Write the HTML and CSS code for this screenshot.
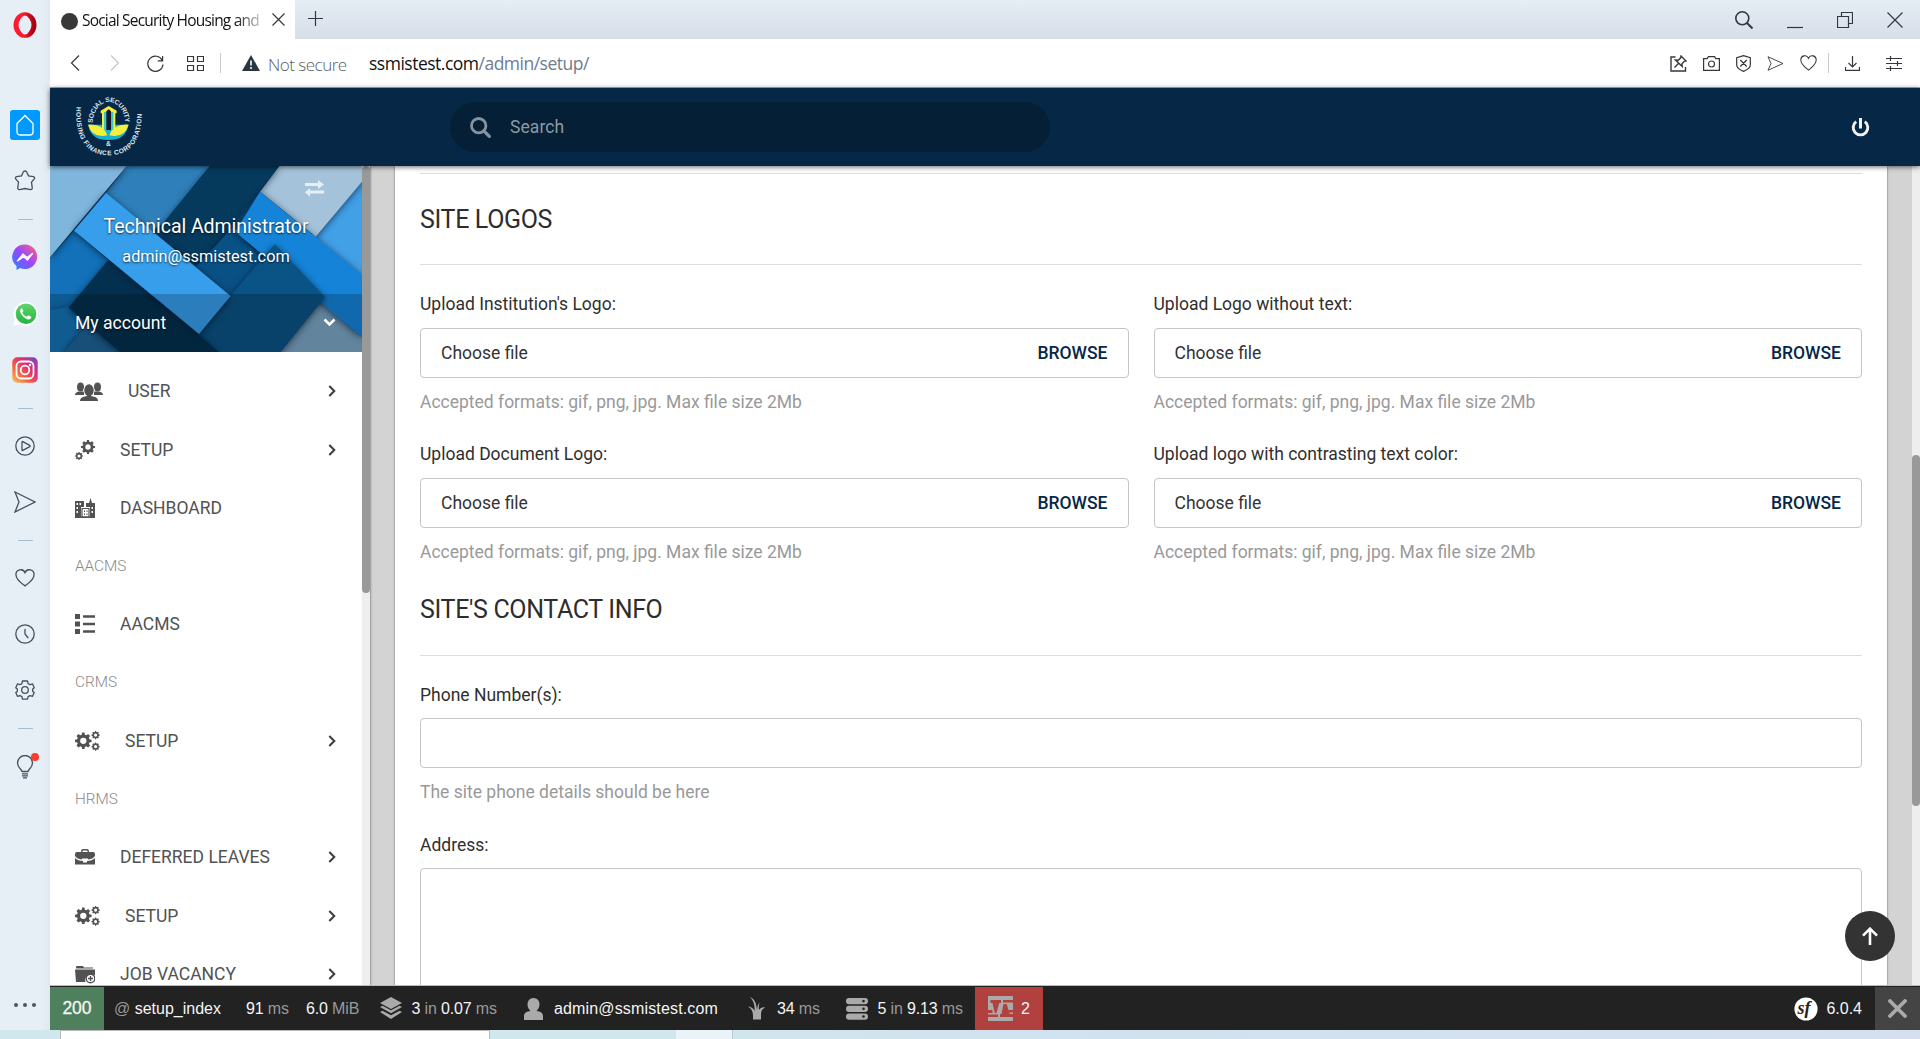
FILE: index.html
```html
<!DOCTYPE html>
<html lang="en">
<head>
<meta charset="utf-8">
<title>Social Security Housing and Finance Corporation</title>
<link rel="stylesheet" href="styles.css">
</head>
<body>
<svg class="defs" width="0" height="0">
  <defs>
    <linearGradient id="gMsg" x1="0" y1="1" x2="1" y2="0"><stop offset="0" stop-color="#1a8dff"/><stop offset=".5" stop-color="#9a45ff"/><stop offset="1" stop-color="#ff6a6a"/></linearGradient>
    <linearGradient id="gInsta" x1="0" y1="1" x2="1" y2="0"><stop offset="0" stop-color="#fdc55a"/><stop offset=".35" stop-color="#f56040"/><stop offset=".65" stop-color="#d92e7f"/><stop offset="1" stop-color="#6a4bc8"/></linearGradient>
    <linearGradient id="gWa" x1="0" y1="0" x2="0" y2="1"><stop offset="0" stop-color="#5fd66b"/><stop offset="1" stop-color="#25b33f"/></linearGradient>
    <linearGradient id="gOp" x1="0" y1="0" x2="1" y2="0"><stop offset=".4" stop-color="#ff1b2d"/><stop offset="1" stop-color="#a70014"/></linearGradient>
    <path id="cog" fill-rule="evenodd" d="M8.6 0h2.8l.5 2.6 1.7.7L15.8 1.8l2.4 2.4-1.5 2.2.7 1.7 2.6.5v2.8l-2.6.5-.7 1.7 1.5 2.2-2.4 2.4-2.2-1.5-1.7.7-.5 2.6H8.6l-.5-2.6-1.7-.7-2.2 1.5-2.4-2.4 1.5-2.2-.7-1.7L0 11.400V8.600l2.600-.5.7-1.7L1.800 4.200 4.200 1.800l2.200 1.500 1.700-.7zM10 6.200a3.800 3.800 0 1 0 0 7.600 3.800 3.800 0 0 0 0-7.600z"/>
    <symbol id="cogs" viewBox="0 0 25 20"><use href="#cog" transform="translate(0 1.500) scale(.83)"/><use href="#cog" transform="translate(16.500 0) scale(.41)"/><use href="#cog" transform="translate(16.500 11.500) scale(.41)"/></symbol>
    <symbol id="chev" viewBox="0 0 8 12"><path d="M1.300 1l5 5-5 5" fill="none" stroke="currentColor" stroke-width="2"/></symbol>
    <symbol id="heart" viewBox="0 0 20 18"><path d="M10 17C7 14.500 1 11 1 6a4.700 4.700 0 0 1 9-2.300A4.700 4.700 0 0 1 19 6c0 5-6 8.500-9 11z"/></symbol>
    <symbol id="plane" viewBox="0 0 22 22"><path d="M1 1l20 10L1 21l4-10z"/></symbol>
  </defs>
</svg>

<div class="window">
  <aside class="rail">
    <svg class="opera" width="26" height="26" viewBox="0 0 26 26"><ellipse cx="13" cy="13" rx="9" ry="10.300" fill="none" stroke="url(#gOp)" stroke-width="5"/><ellipse cx="13" cy="13" rx="5.500" ry="9.500" fill="#e5edf5"/></svg>
    <div class="rail-item home"><svg width="20" height="22" viewBox="0 0 20 22"><path d="M2 9.500L10 1.500l8 8V18a3 3 0 0 1-3 3H5a3 3 0 0 1-3-3z"/></svg></div>
    <div class="rail-item star"><svg width="22" height="21" viewBox="0 0 22 21"><path d="M11 1q1.500 0 2 1.500l1.500 3.300 4.800.8q1.900.6 1 2.300l-2.800 3.300.8 6q-.2 1.700-2 1.500L11 18.500 5.700 19.700q-1.800.2-2-1.500l.8-6L1.700 8.900q-.9-1.700 1-2.300l4.800-.8L9 2.500Q9.500 1 11 1z"/></svg></div>
    <hr>
    <div class="rail-item"><svg class="solid" width="26" height="26" viewBox="0 0 26 26"><path d="M13 .5a12.300 12.300 0 1 1-5 23.600L4.500 26v-4A12.300 12.300 0 0 1 13 .5z" fill="url(#gMsg)"/><path d="M5.500 17l5.500-7 4 3.500 5.500-4-5 6.500-4-3.200z" fill="#fff" stroke="#fff" stroke-linejoin="round"/></svg></div>
    <div class="rail-item chat"><svg class="solid" width="26" height="26" viewBox="0 0 26 26"><path d="M14 1a12 12 0 1 1-6 22.300L1 25l1.800-6.500A12 12 0 0 1 14 1z" fill="#fff"/><circle cx="14" cy="12.700" r="10.300" fill="url(#gWa)"/><path d="M10 7c-2 1-2.500 3-1 5.500s4 5.300 7 6c2 .3 3.500-1 3.300-2.700l-3-1.500-1.500 1.500c-2-.7-3.700-2.300-4.500-4.300L11.500 10z" fill="#fff"/></svg></div>
    <div class="rail-item"><svg class="solid" width="26" height="26" viewBox="0 0 26 26"><rect x=".3" y=".3" width="25.400" height="25.400" rx="5" fill="url(#gInsta)"/><g fill="none" stroke="#fff" stroke-width="1.800"><rect x="4.500" y="4.500" width="17" height="17" rx="4.500"/><circle cx="13" cy="13" r="4.300"/></g><circle cx="18" cy="8" r="1.200" fill="#fff"/></svg></div>
    <hr>
    <div class="rail-item"><svg width="20" height="20" viewBox="0 0 20 20"><circle cx="10" cy="10" r="9.200"/><path d="M7 6q0-.8.800-.4l7 3.800q.8.600 0 1.200l-7 3.800q-.8.400-.8-.4z"/></svg></div>
    <div class="rail-item"><svg width="22" height="22"><use href="#plane"/></svg></div>
    <hr>
    <div class="rail-item"><svg width="20" height="18"><use href="#heart"/></svg></div>
    <div class="rail-item"><svg width="20" height="20" viewBox="0 0 20 20"><circle cx="10" cy="10" r="9.200"/><path d="M10 5v5l3.300 4"/></svg></div>
    <div class="rail-item"><svg width="20" height="20" viewBox="0 0 20 20"><path d="M7.500 1h5l.6 2.600 2 1.100 2.500-.8 1.600 3.800-1.500 1.300v2.400l1.500 1.200-1.600 3.700-2.500-.7-2 1-.6 2.600h-5L6.900 16.600l-2-1-2.500.7L.8 12.600l1.500-1.200V9L.8 7.700 2.400 3.900l2.500.8 2-1.100z" stroke-linejoin="round"/><circle cx="10" cy="10" r="3.300"/></svg></div>
    <hr>
    <div class="rail-item bulb"><svg width="18" height="24" viewBox="0 0 18 24"><path d="M6 16.500C5.500 14 1.500 12.500 1.500 8a7.500 7.500 0 0 1 15 0c0 4.500-4 6-4.500 8.500zM6 18.800h6M6 20.800h6M7 22.800h4"/></svg><i class="dot"></i></div>
    <div class="rail-item more"><i></i><i></i><i></i></div>
  </aside>

  <div class="browser">
    <div class="tabs">
      <div class="tab">
        <i class="favicon"></i><span class="tab-title">Social Security Housing and</span>
        <svg class="ln" width="13" height="13" viewBox="0 0 13 13"><path d="M.5.500l12 12M12.500.500l-12 12"/></svg>
      </div>
      <svg class="ln plus" width="15" height="15" viewBox="0 0 15 15"><path d="M7.500 0v15M0 7.500h15"/></svg>
      <div class="win-btns">
        <svg class="ln" width="18" height="18" viewBox="0 0 18 18"><circle cx="7.300" cy="7.300" r="6.500" stroke-width="1.600"/><path d="M12 12l5.500 5.500" stroke-width="2"/></svg>
        <svg class="ln" width="16" height="18" viewBox="0 0 16 18"><path d="M0 16.500h16"/></svg>
        <svg class="ln" width="16" height="16" viewBox="0 0 16 16"><path d="M.5 4.500h11v11H.5zM4.500 4.500v-4h11v11h-4"/></svg>
        <svg class="ln" width="16" height="16" viewBox="0 0 16 16"><path d="M.5.500l15 15M15.500.500l-15 15"/></svg>
      </div>
    </div>

    <div class="address">
      <svg class="ln" width="10" height="16" viewBox="0 0 10 16"><path d="M9 .500L1.500 8 9 15.500"/></svg>
      <svg class="ln off" width="10" height="16" viewBox="0 0 10 16"><path d="M1 .500L8.500 8 1 15.500"/></svg>
      <svg class="ln" width="17" height="17" viewBox="0 0 17 17"><path d="M15.300 5.500A7.600 7.600 0 1 0 16 9.500M15.600 1v4.800h-4.800"/></svg>
      <svg class="ln speed" width="17" height="15" viewBox="0 0 17 15"><path d="M.5.500h6v5h-6zM10.500.500h6v5h-6zM.5 9.500h6v5h-6zM10.500 9.500h6v5h-6z"/></svg>
      <i class="sep"></i>
      <svg class="warn" width="18" height="16" viewBox="0 0 18 16"><path d="M9 0l9 16H0z" fill="#2b3542"/><path d="M9 5.500v5M9 12v2" stroke="#fff" stroke-width="1.600"/></svg>
      <span class="insecure">Not secure</span>
      <span class="url">ssmistest.com<em>/admin/setup/</em></span>
      <div class="actions">
        <svg class="ln" width="17" height="17" viewBox="0 0 17 17"><path d="M5.500 2H1v14h14.500v-4" stroke-width="1.400"/><path d="M11 1l5 5-1.700.3-2.300 2.500.2 2.700-6.700-6.500 2.700.2L10.700 2.800zM8.500 8.500L4.500 12.500" stroke-width="1.400"/></svg>
        <svg class="ln" width="17" height="15" viewBox="0 0 17 15"><path d="M.6 2.600h3.600l1.200-2h6.200l1.200 2h3.600v11.800H.6z"/><circle cx="8.500" cy="8" r="3"/></svg>
        <svg class="ln" width="15" height="17" viewBox="0 0 15 17"><path d="M7.500.600l6.800 2v7.500c0 3-3.500 5-6.800 6.300C4.200 15.100.7 13.100.7 10.100V2.600zM4.300 5l6.400 6.500M10.700 5L4.300 11.500"/></svg>
        <svg class="ln" width="17" height="15" viewBox="0 0 22 20"><path d="M1 1l20 9-20 9 4-9z"/></svg>
        <svg class="ln" width="17" height="16" viewBox="0 0 20 18" preserveAspectRatio="none"><use href="#heart"/></svg>
        <i class="sep"></i>
        <svg class="ln" width="15" height="15" viewBox="0 0 15 15"><path d="M7.500 0v11M3.500 7l4 4 4-4M.5 11v3.400h14V11"/></svg>
        <svg class="ln" width="16" height="15" viewBox="0 0 16 15"><path d="M0 2.500h16M0 7.500h16M0 12.500h16M4.500 0v5M11.500 5v5M4.500 10v5"/></svg>
      </div>
    </div>

    <div class="page">
      <header class="topbar">
        <svg class="brand" width="80" height="78" viewBox="30 0 240 234">
          <path id="arcIn" d="M98 108 A49 66 0 0 1 196 108" fill="none"/>
          <path id="arcOut" d="M50 54 C44 120 60 202 147 202 S250 120 244 54" fill="none"/>
          <path d="M85 110h120q-6 46-60 46t-60-46z" fill="#18b3cf"/>
          <path d="M84 110q45-4 58 32-45 10-58-32zM206 110q-45-4-58 32 45 10 58-32z" fill="#f6ee3c"/>
          <path d="M122 68l24-14 24 14v8h-4v48h-40V76h-4z" fill="#f6ee3c"/>
          <path d="M132 72h28v52h-28z" fill="#3ac6cf"/>
          <path d="M139 70l7-6 7 6v56h-14z" fill="#14182a"/>
          <g class="brand-text"><text textLength="174"><textPath href="#arcIn" startOffset="3">SOCIAL SECURITY</textPath></text><text textLength="382"><textPath href="#arcOut" startOffset="2">HOUSING FINANCE CORPORATION</textPath></text><text x="138" y="174">&amp;</text></g>
        </svg>
        <div class="search"><svg width="21" height="21" viewBox="0 0 21 21"><circle cx="8.700" cy="8.700" r="7.200"/><path d="M13.800 13.800l5.500 5.500" stroke-width="3.300" stroke-linecap="round"/></svg><span>Search</span></div>
        <svg class="power" width="19" height="19" viewBox="0 0 19 19"><path d="M5.200 3.700a7.300 7.300 0 1 0 8.600 0"/><path d="M9.500 0v10.500" stroke-width="3"/></svg>
      </header>

      <div class="body">
        <nav class="sidebar">
          <div class="user">
            <svg class="user-bg" viewBox="150 18 936 558" preserveAspectRatio="none">
              <rect x="150" y="18" width="936" height="558" fill="#0b4f82"/>
              <g class="tiles">
                <path d="M150 292l72-80 105 90-177 220z" fill="#1271b8"/>
                <path d="M150 450l56-10 60 50-76 86h-40z" fill="#1474b6"/>
                <path d="M265 490l-75 86h180z" fill="#1d6397"/>
                <path d="M380 18h250L490 190l-40 25L318 98z" fill="#2f80ba"/>
                <path d="M1086 65v290L930 230z" fill="#42a0e6"/>
                <path d="M838 18h248v47L947 230 780 95z" fill="#a4c2d9"/>
                <path d="M630 18h208L590 320 470 215z" fill="#053a5c"/>
                <path d="M700 200l85 100-93 108-104-88z" fill="#095185"/>
                <path d="M963 425l123 107v44H835z" fill="#7ca5c5"/>
                <path d="M780 95l306 250v187L705 215z" fill="#1584d8"/>
                <path d="M380 18H150v274z" fill="#80b5dc"/>
                <path d="M780 303l45-50 150 159-133 164H650l-60-50z" fill="#0a5385"/>
                <path d="M325 300l332 276H360L206 443z" fill="#04304f"/>
                <path d="M318 98l374 310-95 114-375-310z" fill="#369eea"/>
              </g>
            </svg>
            <svg class="swap" width="19" height="17" viewBox="0 0 19 17"><path d="M0 3h13V0l6 4.500L13 9V6H0zM19 10.500H5V8L0 12.300l5 4.500V13.500h14z"/></svg>
            <div class="who"><strong>Technical Administrator</strong><span>admin@ssmistest.com</span></div>
            <div class="account"><span>My account</span><svg width="13" height="9" viewBox="0 0 13 9"><path d="M1.500 1.500l5 5 5-5"/></svg></div>
          </div>
          <ul class="menu">
            <li><svg width="28" height="19" viewBox="0 0 28 19"><ellipse cx="5.500" cy="5" rx="3.500" ry="4.500"/><ellipse cx="22.500" cy="5" rx="3.500" ry="4.500"/><path d="M0 13q0-3 4-3.500h5V13zM28 13q0-3-4-3.500h-5V13z"/><ellipse cx="14" cy="8" rx="5.500" ry="6.800" fill="#fff"/><path d="M4 19q0-5 6-6h8q6 1 6 6z" fill="#fff"/><ellipse cx="14" cy="8.300" rx="4.700" ry="6"/><path d="M5 19q0-4 5-4.500l2-.5v-2h4v2l2 .5q5 .5 5 4.500z"/></svg><span>USER</span><svg class="chev"><use href="#chev"/></svg></li>
            <li><svg width="20" height="20" viewBox="0 0 20 20"><use href="#cog" transform="translate(6 0) scale(.7)"/><use href="#cog" transform="translate(0 12) scale(.4)"/></svg><span>SETUP</span><svg class="chev"><use href="#chev"/></svg></li>
            <li><svg width="20" height="20" viewBox="0 0 20 20"><path d="M0 3h9v6H6v11H0zM11 5h3l1.500-5L17 5h3v15h-5V9h-4z"/><path d="M7 10.500h7V19H7z" fill="none" stroke="#525252" stroke-width="1.200"/><path d="M1.500 5h1.500v2H1.500zM4.500 5H6v2H4.500zM1.500 9h1.500v2H1.500zM1.500 13h1.500v2H1.500zM16.500 9H18v2h-1.500zM16.500 13H18v2h-1.500z" fill="#fff"/><path d="M0 18.500h20V20H0zM9 12.500h1v1.500H9zM11.500 12.500h1v1.500h-1zM9 15.500h1V17H9zM11.500 15.500h1V17h-1z"/></svg><span>DASHBOARD</span></li>
            <li class="head">AACMS</li>
            <li class="short"><svg width="20" height="20" viewBox="0 0 20 20"><path d="M0 0h5v5H0zM0 7.500h5v5H0zM0 15h5v5H0zM8 1.300h12v2.400H8zM8 8.800h12v2.400H8zM8 16.300h12v2.400H8z"/></svg><span>AACMS</span></li>
            <li class="head">CRMS</li>
            <li><svg width="25" height="20"><use href="#cogs"/></svg><span>SETUP</span><svg class="chev"><use href="#chev"/></svg></li>
            <li class="head">HRMS</li>
            <li><svg width="20" height="20" viewBox="0 0 20 20"><path d="M0 7q0-2 2-2h4q0-3 2-3h4q2 0 2 3h4q2 0 2 2v2q-2 3-7 3.500V11.500H7v1Q2 12 0 9zM7.300 5h5.400q0-1.500-1-1.500H8.300q-1 0-1 1.500zM0 11q3 3 8 3v1.500h4V14q5 0 8-3v6.500H0z" fill-rule="evenodd"/></svg><span>DEFERRED LEAVES</span><svg class="chev"><use href="#chev"/></svg></li>
            <li><svg width="25" height="20"><use href="#cogs"/></svg><span>SETUP</span><svg class="chev"><use href="#chev"/></svg></li>
            <li><svg width="20" height="20" viewBox="0 0 20 20"><path d="M1 3q0-1 1-1h6l1 1.500h9v1H1zM0 5.500h20v6a6 6 0 0 0-9.500 6.500H1z"/><circle cx="15.500" cy="14.500" r="4.300" fill="none" stroke="#525252" stroke-width="1.400"/><path d="M15.500 12v5M13 14.500h5" stroke="#525252" stroke-width="1.400"/></svg><span>JOB VACANCY</span><svg class="chev"><use href="#chev"/></svg></li>
          </ul>
        </nav>
        <div class="track side-track"><i></i></div>

        <main class="content">
          <div class="card">
            <h2>SITE LOGOS</h2>
            <div class="grid">
              <div class="field"><label>Upload Institution's Logo:</label><div class="file"><span>Choose file</span><b>BROWSE</b></div><small>Accepted formats: gif, png, jpg. Max file size 2Mb</small></div>
              <div class="field"><label>Upload Logo without text:</label><div class="file"><span>Choose file</span><b>BROWSE</b></div><small>Accepted formats: gif, png, jpg. Max file size 2Mb</small></div>
              <div class="field"><label>Upload Document Logo:</label><div class="file"><span>Choose file</span><b>BROWSE</b></div><small>Accepted formats: gif, png, jpg. Max file size 2Mb</small></div>
              <div class="field"><label>Upload logo with contrasting text color:</label><div class="file"><span>Choose file</span><b>BROWSE</b></div><small>Accepted formats: gif, png, jpg. Max file size 2Mb</small></div>
            </div>
            <h2 class="contact">SITE'S CONTACT INFO</h2>
            <div class="field plain phone"><label>Phone Number(s):</label><div class="file"></div><small>The site phone details should be here</small></div>
            <div class="field plain"><label>Address:</label><div class="file area"></div></div>
          </div>
        </main>
        <div class="track page-track"><i></i></div>
        <div class="to-top"><svg width="16" height="18" viewBox="0 0 16 18"><path d="M8 18V2M1 8.700l7-7 7 7"/></svg></div>
      </div>

      <footer class="debug">
        <div class="status">200</div>
        <div class="d route"><i>@</i> setup_index</div>
        <div class="d time">91 <i>ms</i></div>
        <div class="d mem">6.0 <i>MiB</i></div>
        <div class="d cache"><svg width="22" height="23" viewBox="0 0 22 23"><path d="M11 0l11 6-11 6L0 6zM0 10l2.500-1.300L11 13.300l8.500-4.600L22 10l-11 6.200zM0 15l2.500-1.300L11 18.300l8.500-4.600L22 15l-11 7z"/></svg><span>3 <i>in</i> 0.07 <i>ms</i></span></div>
        <div class="d login"><svg width="19" height="22" viewBox="0 0 19 22"><path d="M9.500 0c4 0 6 3 6 6.500 0 2.700-1.500 5.300-3 6.500 4 .5 6.500 2 6.500 5v4H0v-4c0-3 2.500-4.500 6.500-5-1.500-1.200-3-3.800-3-6.500C3.500 3 5.500 0 9.500 0z"/></svg><span>admin@ssmistest.com</span></div>
        <div class="d twig"><svg width="18" height="23" viewBox="0 0 18 23"><path d="M2 0c5 2 6.500 7 7 13 .3-3 .8-5 2.500-7.500-.8 3-.7 5-.5 7.500 1.500-2 3.500-3 6-2.500-3 1.500-4 4-4 7v5H5v-4c0-4-1.500-7-5-9 3.500.2 5.500 2 6.500 4.500C7 9 6 4 2 0z"/></svg><span>34 <i>ms</i></span></div>
        <div class="d db"><svg width="22" height="22" viewBox="0 0 22 22"><rect width="22" height="6.300" rx="3"/><rect y="7.700" width="22" height="6.300" rx="3"/><rect y="15.400" width="22" height="6.300" rx="3"/><g fill="#222"><circle cx="17.500" cy="3.100" r="1.300"/><circle cx="17.500" cy="10.800" r="1.300"/><circle cx="17.500" cy="18.500" r="1.300"/></g></svg><span>5 <i>in</i> 9.13 <i>ms</i></span></div>
        <div class="alert"><svg width="25" height="25" viewBox="0 0 25 25"><path d="M0 0h25v25H0z" fill="#aaa"/><path d="M2.500 4H13v3h-1.800L8.500 17H6.800L4.500 7h-2zM0 14h4.500v3H0zM0 18.500h10V21H0zM15.500 8h3.200l3 10H25v3H12v-3h1.500zM20 14h5v2.500h-4.300zM15 4h10v2.500H15z" fill="#b0413e"/></svg><span>2</span></div>
        <div class="version"><svg width="24" height="24" viewBox="0 0 24 24"><circle cx="12" cy="12" r="11.600" fill="#fff"/><text x="3.500" y="17">sf</text></svg><span>6.0.4</span></div>
        <div class="close"><svg width="19" height="19" viewBox="0 0 19 19"><path d="M2 2l15 15M17 2L2 17"/></svg></div>
      </footer>
    </div>
  </div>
</div>
<div class="taskbar"><div class="box"></div><div class="active"></div><span class="clock">9:35 PM</span></div>
</body>
</html>
```

FILE: styles.css
```css
* { box-sizing: border-box; }
body { margin: 0; width: 1920px; height: 1039px; overflow: hidden; font-family: Roboto, sans-serif; font-size: 17.5px; color: #333; display: flex; flex-direction: column; }
i, em { font-style: normal; }
svg { display: block; flex: none; }
.defs { position: absolute; }
.window { display: flex; height: 1030px; flex: none; }

/* Opera rail */
.rail { width: 50px; background: linear-gradient(90deg, #e6eef6 80%, #e0e9f1); display: flex; flex-direction: column; align-items: center; gap: 26px; padding: 12px 0 10px; }
.opera { margin-bottom: 46px; }
.rail hr { width: 15px; height: 1px; border: 0; background: #a9bccb; margin: -3px 0 -4px; flex: none; }
.rail-item { width: 30px; height: 30px; flex: none; display: flex; align-items: center; justify-content: center; position: relative; }
.rail-item svg { fill: none; stroke: #46505c; stroke-width: 1.3; }
.rail-item .solid { stroke: none; }
.star { margin: -1px 0 1px; }
.chat { margin-top: 1px; }
.bulb { margin-top: 1px; }
.home { background: #0099ff; border-radius: 3px; }
.home svg { stroke: #fff; }
.dot { position: absolute; top: 1px; right: 1px; width: 8px; height: 8px; border-radius: 50%; background: #ff3b30; }
.more { margin-top: auto; gap: 5px; }
.more i { width: 4px; height: 4px; flex: none; border-radius: 50%; background: #4b5563; }

/* Browser chrome */
.browser { width: 1870px; display: flex; flex-direction: column; }
.ln { fill: none; stroke: #33383e; stroke-width: 1.2; }
.tabs { height: 39px; flex: none; display: flex; align-items: center; background: linear-gradient(#e5edf5, #d7dee8); font-family: "Open Sans", sans-serif; }
.tab { width: 245px; height: 39px; background: #fff; display: flex; align-items: center; padding: 0 11px; }
.favicon { width: 17px; height: 17px; border-radius: 50%; background: #383838; margin: 3px 4px 0 0; flex: none; }
.tab-title { width: 181px; font-size: 15.5px; letter-spacing: -.8px; white-space: nowrap; overflow: hidden; margin-right: 9px; color: #111; -webkit-mask-image: linear-gradient(90deg, #000 85%, rgba(0,0,0,.15)); flex: none; }
.plus { margin: 0 auto 3px 13px; }
.win-btns { display: flex; align-items: center; gap: 34px; padding-right: 17px; }
.address { height: 49px; flex: none; background: #fff; border-bottom: 1px solid #a9b0b8; display: flex; align-items: center; padding: 0 18px 0 20px; font-family: "Open Sans", sans-serif; }
.address .off { margin: 0 27px 0 30px; stroke: #c3c6ca; }
.speed { margin-left: 23px; }
.sep { width: 1px; height: 20px; background: #c5c9ce; flex: none; }
.address > .sep { margin: 0 21px 0 16px; }
.insecure { width: 79px; margin: 3px 22px 0 8px; font-size: 17px; letter-spacing: -.5px; font-weight: 300; color: #5a6069; white-space: nowrap; }
.url { font-size: 17.5px; letter-spacing: -.5px; color: #111; white-space: nowrap; }
.url em { color: #6c7d8f; }
.actions { margin-left: auto; display: flex; align-items: center; gap: 16px; }
.actions .sep { margin: 0 0 0 -5px; }
.actions svg:last-child { margin-left: 10px; }

/* Page header */
.page { height: 942px; display: flex; flex-direction: column; }
.topbar { height: 78px; flex: none; background: #062846; display: flex; align-items: center; padding: 0 50px 0 20px; box-shadow: 0 1px 5px rgba(0,0,0,.6); z-index: 2; }
.brand { margin-right: 300px; }
.brand-text { font: bold 20px "Liberation Sans", sans-serif; fill: #dfe5ea; }
.search { width: 600px; height: 50px; border-radius: 25px; background: #051f36; display: flex; align-items: center; padding-left: 20px; gap: 19px; color: #8c99a5; letter-spacing: .1px; }
.search svg { fill: none; stroke: #8693a0; stroke-width: 2.8; }
.power { margin-left: auto; fill: none; stroke: #f2f2f2; stroke-width: 2.9; }

/* Sidebar */
.body { flex: 1; min-height: 0; display: flex; position: relative; overflow: hidden; background: #d3d3d3; }
.sidebar { width: 312px; background: #fff; overflow: hidden; }
.user { height: 186px; position: relative; color: #fff; display: flex; flex-direction: column; text-shadow: 0 1px 2px rgba(0,0,0,.7); }
.user-bg { position: absolute; inset: 0; width: 312px; height: 186px; }
.tiles path { filter: drop-shadow(0 4px 11px rgba(0,15,40,.65)); }
.swap { position: absolute; left: 255px; top: 14px; fill: #e8eef3; }
.who { height: 128px; padding-top: 45px; position: relative; text-align: center; display: flex; flex-direction: column; }
.who strong { font-weight: 400; font-size: 19.6px; line-height: 31px; letter-spacing: -.1px; }
.who span { font-size: 16.3px; line-height: 27px; margin-top: 1px; }
.account { height: 58px; background: rgba(0,0,0,.2); position: relative; display: flex; align-items: center; justify-content: space-between; padding: 0 26px 1px 25px; font-size: 17.6px; }
.account svg { fill: none; stroke: #fff; stroke-width: 2.5; }
.menu { list-style: none; margin: 0; padding: 10px 26px 0 25px; color: #525252; }
.menu li { height: 58.4px; display: flex; align-items: center; font-size: 17.5px; }
.menu .short { height: 57.4px; }
.menu li > svg { fill: #525252; }
.menu li span { margin-left: 25px; }
.menu .chev { width: 8px; height: 12px; margin-left: auto; color: #3c3c3c; }
.menu .head { font-size: 15.3px; color: #8a8a8a; font-weight: 300; }
.track { width: 8px; background: #eee; flex: none; }
.track i { display: block; width: 8px; background: #999; border-radius: 4px; }
.side-track { box-shadow: 1px 0 2px rgba(0,0,0,.3); z-index: 1; }
.side-track i { height: 427px; }
.page-track i { height: 351px; margin-top: 289px; }

/* Settings form */
.content { flex: 1; padding: 0 25px; }
.card { height: 840px; background: #fff; box-shadow: 0 0 2px rgba(0,0,0,.55); padding: 0 25px; display: flow-root; }
h2 { margin: 7px 0 0; height: 92px; border-top: 1px solid #ddd; border-bottom: 1px solid #ddd; font-size: 25px; font-weight: 400; line-height: 92px; color: #2d2d2d; letter-spacing: -.35px; }
.contact { border-top: 0; margin: -1px 0 0; height: 80px; line-height: 68px; }
.grid { display: grid; grid-template-columns: 1fr 1fr; column-gap: 25px; padding-top: 26px; height: 312px; grid-auto-rows: 150px; }
.field { display: flex; flex-direction: column; }
label { height: 37px; line-height: 27px; color: #2f2f2f; }
.plain label { height: 36px; }
.file { height: 50px; border: 1px solid #c5c5c5; border-radius: 4px; display: flex; align-items: center; justify-content: space-between; padding: 0 20px; }
.file b { font-weight: 500; color: #062846; }
small { font-size: 17.5px; color: #999; line-height: 27px; margin-top: 11px; }
.phone { margin-top: 26px; height: 150px; }
.area { height: 170px; }
.to-top { position: absolute; right: 25px; bottom: 25px; width: 50px; height: 50px; border-radius: 50%; background: #333; display: flex; align-items: center; justify-content: center; }
.to-top svg { fill: none; stroke: #fff; stroke-width: 2.6; }

/* Debug toolbar */
.debug { height: 44px; flex: none; background: #222; border-top: 1px solid #222; display: flex; font: 16px/43px "Liberation Sans", Arial, sans-serif; color: #f5f5f5; white-space: nowrap; box-shadow: 0 -1px 0 #bbb; z-index: 2; }
.debug i { color: #999; }
.debug svg { fill: #aaa; }
.status { width: 54px; background: #4f805d; text-align: center; font-size: 17.5px; -webkit-text-stroke: .3px; }
.d { display: flex; align-items: center; gap: 9.5px; white-space: pre; letter-spacing: -.15px; }
.route { margin-left: 10px; width: 132px; gap: 0; letter-spacing: 0; }
.time { width: 60px; gap: 0; }
.mem { width: 74px; gap: 0; }
.cache { width: 144px; }
.login { width: 224px; gap: 11px; letter-spacing: .15px; }
.twig { width: 98px; gap: 11px; }
.db { width: 129px; }
.alert { width: 68px; background: #b0413e; display: flex; align-items: center; padding-left: 13px; gap: 8px; }
.version { margin-left: auto; display: flex; align-items: center; gap: 8px; padding-right: 13px; }
.version text { font: italic bold 18px "Liberation Serif", serif; fill: #222; }
.close { width: 45px; background: #444; display: flex; align-items: center; justify-content: center; }
.close svg { stroke: #aaa; stroke-width: 3.8; stroke-linecap: round; }

/* Desktop taskbar */
.taskbar { height: 9px; display: flex; background: linear-gradient(90deg, #d0e7ed 0 36%, #d0e3ef 50%, #d5dff0); overflow: hidden; }
.box { width: 430px; margin-left: 60px; background: #fff; border: 1px solid #bbb; border-bottom: 0; }
.active { width: 57px; margin-left: 186px; background: #eaf4f8; border-right: 1px solid #b9c8d2; }
.clock { margin: 4px 82px 0 auto; font: 15px/18px "Open Sans", sans-serif; letter-spacing: -.8px; color: #000; }
```
